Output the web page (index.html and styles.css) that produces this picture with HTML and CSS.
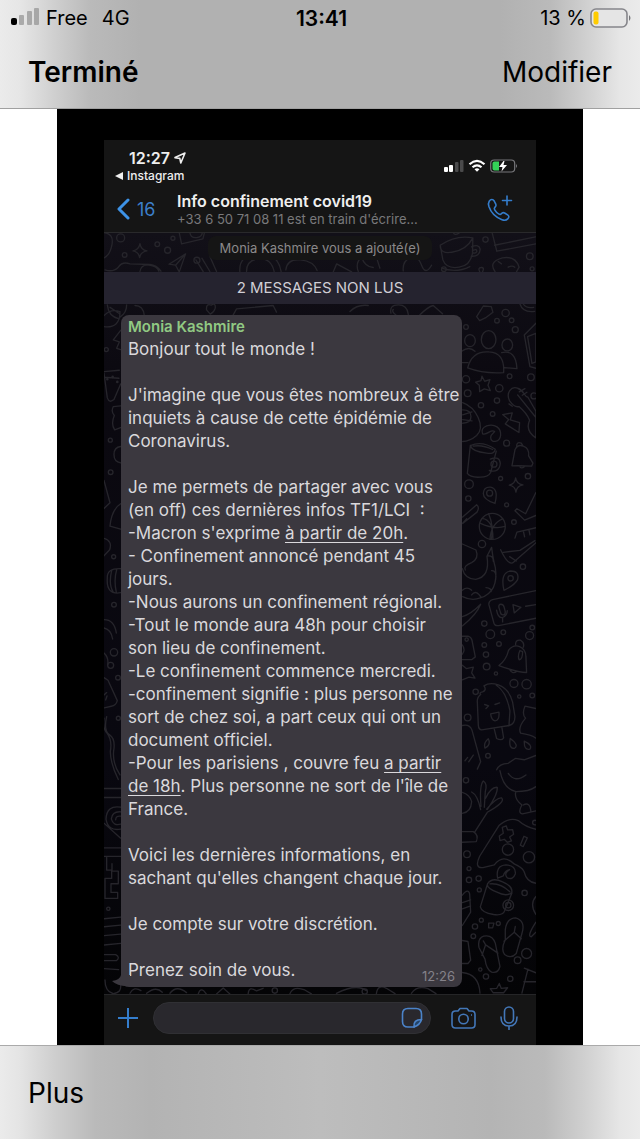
FILE: index.html
```html
<!DOCTYPE html>
<html lang="fr">
<head>
  <meta charset="UTF-8" />
  <meta name="viewport" content="width=device-width, initial-scale=1.0" />
  <title>Info confinement covid19</title>
  <link rel="stylesheet" href="styles.css">
</head>
<body>
  <header class="top-bar">
    <div class="status">
      <div class="status-left">
        <svg class="signal" viewBox="0 0 30 20" width="30" height="20" aria-hidden="true">
          <rect x="0" y="12" width="6" height="7" rx="2" fill="#000"/>
          <g fill="#929292" opacity=".7">
            <rect x="8" y="9" width="5" height="10" rx="1"/>
            <rect x="16" y="5" width="5" height="14" rx="1"/>
            <rect x="23" y="2" width="5" height="17" rx="1"/>
          </g>
        </svg>
        <span>Free</span>
        <span class="network">4G</span>
      </div>
      <time class="clock">13:41</time>
      <div class="status-right">
        <span>13 %</span>
        <svg viewBox="0 0 42 20" width="42" height="20" aria-hidden="true">
          <rect x="1" y="1" width="36" height="18" rx="5" fill="#e5e5e5" stroke="#85858a" stroke-width="1.6"/>
          <rect x="3.5" y="3.5" width="5" height="13" rx="2" fill="#fc0"/>
          <path d="M39 7q3 3 0 6z" fill="#77777b"/>
        </svg>
      </div>
    </div>
    <nav class="nav">
      <button class="nav-button done" type="button">Terminé</button>
      <button class="nav-button" type="button">Modifier</button>
    </nav>
  </header>

  <main class="stage">
    <section class="phone">
      <header class="phone-header">
        <div class="phone-status">
          <div>
            <div class="phone-clock">12:27
              <svg viewBox="0 0 12 12" width="12" height="12" aria-hidden="true">
                <path d="M1 5.6 11 1 6.8 11 5.8 6.4z" fill="none" stroke="#eee" stroke-width="1.6" stroke-linejoin="round"/>
              </svg>
            </div>
            <a class="back-app" href="#"><svg viewBox="0 0 8 8" width="8" height="8" aria-hidden="true"><path d="M0 4 8 0v8z" fill="#eee"/></svg>Instagram</a>
          </div>
          <svg class="phone-icons" viewBox="0 0 76 16" width="76" height="16" aria-hidden="true">
            <g fill="#fff">
              <rect x="1" y="9" width="4" height="5" rx="1"/>
              <rect x="6" y="7" width="4" height="7" rx="1"/>
            </g>
            <g fill="#4a4a4b">
              <rect x="12" y="4" width="3.500" height="10" rx="1"/>
              <rect x="17" y="2" width="3.500" height="12" rx="1"/>
            </g>
            <g fill="none" stroke="#fff" stroke-width="2.200">
              <path d="M26.500 6.300q7.500-6.800 15 0"/>
              <path d="M29.500 9.300q4.500-4 9 0"/>
            </g>
            <path d="M31.500 11.300q2.500-2 5 0L34 13.800z" fill="#fff"/>
            <rect x="47.700" y="2" width="24" height="12" rx="3.500" fill="none" stroke="#77777b" stroke-width="1.200"/>
            <path d="M51.500 3.500H56v9h-4.500q-2 0-2-2v-5q0-2 2-2z" fill="#34d158"/>
            <path d="M60.500 3 56 9h3.500l-1 4.500L64 7h-3.500l1-4z" fill="#fff"/>
            <path d="M73 6q2 2 0 4z" fill="#77777b"/>
          </svg>
        </div>
        <div class="chat-head">
          <a class="back" href="#" aria-label="Retour, 16 discussions non lues">
            <svg viewBox="0 0 15 22" width="15" height="22" aria-hidden="true"><path d="M12 2 3 11l9 9" fill="none" stroke="#3d92e6" stroke-width="3" stroke-linecap="round" stroke-linejoin="round"/></svg>
            16
          </a>
          <div class="chat-title">
            <h1>Info confinement covid19</h1>
            <p>+33 6 50 71 08 11 est en train d'écrire...</p>
          </div>
          <button class="icon-button" type="button" aria-label="Appeler">
            <svg viewBox="0 0 28 28" width="28" height="28" fill="none" stroke="#347dcc" stroke-width="1.600" stroke-linecap="round" stroke-linejoin="round" aria-hidden="true">
              <path d="M3.200 6.200C4.800 4 7 4 8.200 6l1.700 3.300c.7 1.400-.3 2.400-1.200 3.300-.6.700-.5 1.400 0 2.200 1 1.700 2.500 3.300 4.300 4.300.9.500 1.500.5 2.100-.2 1-1.200 2-1.700 3.500-.9l3 1.900c1.700 1.100 1.600 2.500.1 4-1.400 1.500-3.400 1.700-5.700.8C9.600 22.300 5 17.600 3 11.800c-.7-2.200-.9-3.900.2-5.600z"/>
              <path d="M21 1v9M16.500 5.500h9"/>
            </svg>
          </button>
        </div>
      </header>

      <div class="chat">
        <svg class="wallpaper" viewBox="0 0 432 761" preserveAspectRatio="xMidYMin slice" aria-hidden="true">
          <!-- above and around the notice -->
          <g transform="translate(-4 -98) scale(.333)">
            <circle cx="62" cy="309" r="12"/><circle cx="172" cy="328" r="7"/><circle cx="203" cy="346" r="9"/><circle cx="74" cy="360" r="7"/><circle cx="219" cy="310" r="6"/><circle cx="291" cy="376" r="9"/>
            <path d="M120 326q3 19 21 22-19 3-22 20-3-17-20-20 18-4 21-22z"/>
            <path d="M12 293q30 4 24 36t-24 40M238 294l7 33 64-15 5-20M270 293q2 17 20 15t17-17"/>
            <path d="m257 357-50 31 20 3 11 20zM227 391l30-34M15 405q25 8 40-8 12-18 35-10l60 2q20 2 33 20M120 410q3-22 27-19t30 18M310 410l-22-35M330 410l-24-40M350 410l-20-45"/>
            <path d="M420 410q-4-50 55-54t69 54M440 410q0-35 37-38t46 38M558 405q4-34 44-30t50 32M22 510q3 34 35 42M80 510q0 25-20 37M105 512q25 0 28 30M320 525q-2-20 14-14 14-9 12 9-3 12-15 18zM400 540l10-18 110-10 10 20"/>
          </g>
          <g transform="translate(216 -98) scale(.333)">
            <path d="M361 331q48-32 98-22l-1 45q-6 38-40 43-39 6-49-22zM361 331q0 27 35 21 44-6 63-43M455 336q23-10 26 7-1 23-27 21M461 346q10-5 10 4-2 6-11 4M365 400q45 15 85-5"/>
            <path d="M517 294l14 55 117-22M524 331l123-25M526 411q-22-30 22-42 39-7 50 28l-8 14M535 380l10 7M565 397q12-6 20 0M400 292q4 12 18 2M480 411q-7-12 4-13t4 13"/>
            <circle cx="497" cy="314" r="8"/><circle cx="630" cy="364" r="10"/><circle cx="372" cy="403" r="7"/><circle cx="637" cy="402" r="6"/>
            <path d="M115 410q-10-27 10-43 9 28 35 31M180 400l-8-25 20-20M250 408q-3-29 20-39t35 22 30 0M40 411l10-24 45 24M213 535q-5-25 22-25t30 28-25 11-20-25M90 530q22-22 55-18M300 540q24-24 40-28l28 25"/>
          </g>
          <!-- right-hand side -->
          <g transform="translate(351 67) scale(.333)">
            <path d="m65 50 20-32 24 2 5 17-20 15-20 10zM195 12q9 27 44 22M205 12q9 14 31 10"/>
            <circle cx="152" cy="39" r="11"/><circle cx="126" cy="62" r="7"/><circle cx="170" cy="61" r="7"/><circle cx="181" cy="89" r="9"/><circle cx="33" cy="81" r="7"/>
            <ellipse cx="101" cy="119" rx="22" ry="27"/><ellipse cx="45" cy="122" rx="16" ry="18"/><ellipse cx="157" cy="135" rx="16" ry="18"/>
            <path d="M38 204q13-52 64-48 48 2 44 62-60 4-108-14zM20 154q22-17 40 0M22 188h17M140 158q43-10 46 48l-38-3M243 70l-35 35 17 95 18 5M218 110l13 80 12-4V100z"/>
            <path d="m81 229 8 15 16-5-6 17 7 16-18-5-14 8-1-19-11-9 16-5z"/>
            <circle cx="33" cy="238" r="11"/><circle cx="38" cy="280" r="10"/><circle cx="133" cy="265" r="11"/><circle cx="164" cy="229" r="7"/><circle cx="228" cy="232" r="10"/><circle cx="126" cy="302" r="8"/><circle cx="78" cy="316" r="8"/><circle cx="113" cy="342" r="7"/><circle cx="237" cy="288" r="9"/>
            <path d="M164 303c-12-25 5-45 24-38 22 7 17 24 31 27l24 42v80q-33-22-19-53-9-22-32-41-13 4-28-17zM188 285l55 68M172 319l-10-7M193 276l17-10M202 286l14-9"/>
            <path d="m143 344 29-5-6 21 28 8-2 30-41-26 10-13z"/>
            <path d="M23 308c40 14 70 72 42 99-14 12-29 18-42 18M23 330q25 0 25 20t-25 20M23 345l28-9M23 359l28 4"/>
            <path d="M83 402q-7-16 12-24c25-8 44 7 42 28-2 21-30 26-30 6 0-10 10-12 12-17-11-10-20 12-36 7z"/>
            <path d="m46 437-9 84q9 13 39 11 24 0 31-14l17-64M46 437q36-15 75 11-2 16-26 12-44-5-49-23zM55 439q27-5 58 10M106 478q28-11 30 13-3 29-33 21"/><circle cx="117" cy="493" r="9"/>
            <path d="M171 498l9-48q8-18 25-11 19 7 16 29l13 22-4 9q-34-2-59-1zM185 440q0-16 14-10l5 8M194 499q4 10 15 1"/>
            <circle cx="155" cy="430" r="9"/><circle cx="219" cy="529" r="8"/><circle cx="42" cy="553" r="13"/><circle cx="137" cy="536" r="6"/><circle cx="40" cy="596" r="8"/><circle cx="155" cy="615" r="6"/><circle cx="177" cy="667" r="7"/>
            <path d="M182 534q3 19 22 21-19 3-21 22-2-18-20-21 18-4 19-22zM120 611q-35-12-35-30 1-20 21-19 26 4 14 49z"/><circle cx="104" cy="580" r="9"/>
            <path d="m180 633 29 28 34-14M180 633l6-6 26 15 31-64M23 652l42-37q10 7 1 22l-43 34M23 670l12-13M180 715l6-18 57-13M205 693l4 18M222 690l3 15"/>
            <circle cx="112" cy="680" r="39"/><path d="M75 670q43 20 75 10M101 642q17 40 8 77M81 656q34 4 33 62M143 657q-35 14-38 62"/>
          </g>
          <g transform="translate(351 307) scale(.333)">
            <circle cx="81" cy="12" r="11"/><circle cx="204" cy="80" r="8"/><circle cx="88" cy="251" r="8"/><circle cx="106" cy="283" r="13"/><circle cx="145" cy="277" r="7"/><circle cx="132" cy="312" r="7"/><circle cx="88" cy="315" r="7"/><circle cx="93" cy="344" r="8"/><circle cx="95" cy="380" r="10"/><circle cx="224" cy="287" r="12"/><circle cx="232" cy="263" r="7"/><circle cx="177" cy="431" r="12"/><circle cx="215" cy="433" r="14"/><circle cx="62" cy="456" r="8"/><circle cx="38" cy="533" r="10"/><circle cx="232" cy="467" r="7"/><circle cx="193" cy="470" r="5"/><circle cx="123" cy="401" r="5"/><circle cx="99" cy="648" r="7"/>
            <path d="M22 86q8 32 40 32 44-7 34-69l14-27q4 35 11 60 11 74-45 92-26 10-53-4M31 90q-7-12 19-22 23-13 13-38L22 12M98 48q18-2 17 16M110 92q16-1 12 27M93 143q16 1 16 12M50 165q13-18 29 8M22 151q14-13 28 0"/>
            <path d="M137 29q20 44 36 40L243 8M145 37l50-6 45-29M184 63l-20-13"/>
            <path d="M147 151q-12-54 20-58 27 0 21 26-9 17-41 32z"/><circle cx="167" cy="115" r="8"/>
            <path d="m243 152-130 27q-13 4-11 16l15 55q3 9 14 7l112-22M174 194l4 25 20-17zM132 203q-2-10 6-10t10 10l3 13q0 9-7 9t-8-9zM125 211q4 23 17 22 15-5 15-21M143 234v12M212 199l31-5"/>
            <path d="M22 230q26-7 55-37-12 31-55 65M22 289h17q10 3 12 12l10 50-10 8H22M22 315q10 14 0 28M22 376l12 10 21-4-5 17 10 16-18-3-20 8"/><circle cx="35" cy="299" r="5"/>
            <path d="M132 377q22-16 29-46 14-18 33-11 19 8 19 31l2 47q-30-1-83-21zM182 314q-1-15 15-13 13 8 8 21M165 390q8 14 20 5M195 332q-8 17-2 28 10-1 10-25z"/>
            <path d="M87 438q17-12 43-3 33 12 43 52l7 43q0 23-17 27l-83 13q-9 0-10-14l-3-70q-1-14 10-22-5-6 6-8 13-5 4-18zM124 436q30 19 41 77l-3 45M118 568l7 28q15 8 21-2l-5-30M89 494l12 4-8 8M120 494l14-5M107 522l25-5q2 25-12 26-11-3-13-21z"/>
            <path d="M243 506l-33-7q-10 25 2 36-24 28-15 45 32 5 46 15M22 557q22-5 29 14l26 95-10 22M30 663l8-10M41 666l14-20M90 625q-5-16 10-28 9 18-10 28zM166 596q-6 30 12 30 16-9-12-30zM208 604q-1 29 17 24 9-12-17-24zM125 690q8-18 34-19l22-15 27 4 35-13"/>
          </g>
          <g transform="translate(351 537) scale(.333)">
            <path d="M135 2q10 55 48 63 40 0 60-15M160 10q20 30 53 5M182 67q-4 21 19 38-14 24 2 27l40-9M205 105q20-11 23 20"/>
            <circle cx="33" cy="31" r="8"/>
            <path d="M22 67q22 6 28 28-2 32-28 35M77 119q-9-44-27-53M78 109q-5-64 7-76 13 8 6 32l-3 47M92 85q16-35 35-33 2 20-30 66M95 118q30-36 45-34 13 12-43 43l-37 58M22 185h33q17 10 9 30l-42 2"/>
            <path d="M243 178q-31-6-53-26-28-12-58 15l-58 92q-17 37 10 34l34-8q27-35 61-2 20 8 28 21 8 33 36 36"/>
            <path d="m142 172 12-4 4 12 15-1 3 14-12 8 6 12-13 4-9-9-13 4-2-14 12-8zM207 199l10 5-12 26-9-4z"/>
            <circle cx="159" cy="239" r="17"/><circle cx="222" cy="262" r="17"/><circle cx="240" cy="158" r="7"/><circle cx="36" cy="253" r="10"/><circle cx="42" cy="296" r="6"/><circle cx="42" cy="330" r="8"/><circle cx="71" cy="326" r="8"/><circle cx="73" cy="360" r="6"/><circle cx="209" cy="369" r="8"/>
            <path d="M128 325q-7-38 25-40 31 2 28 27-7 19-24 12-12-13 7-25-15 3-19 19zM98 341l-22 70q4 17 40 23 28 4 33-11l22-54M98 341q14-20 45-5 33 14 27 33-17 12-44-2-33-13-28-26zM105 342q32-3 60 24"/><circle cx="160" cy="406" r="16"/><circle cx="160" cy="406" r="8"/>
            <path d="M22 376q17-22 22-4l3 55-25 40M22 398l25-8M22 417l25-9M22 512l17 3 8 56-8 10H22M243 380q-20 22 0 54M243 457q-28 43-14 44l14-14"/>
            <circle cx="60" cy="470" r="8"/><circle cx="79" cy="451" r="6"/><path d="M101 460h16l-4 14h-12z"/><circle cx="130" cy="461" r="6"/><circle cx="55" cy="499" r="7"/><circle cx="215" cy="551" r="15"/><circle cx="188" cy="571" r="10"/><circle cx="166" cy="627" r="8"/><circle cx="93" cy="620" r="8"/><circle cx="76" cy="599" r="5"/>
            <path d="M72 533q-5-27 14-34 26-6 35 21l14 70q-6 22-25 17-16-8-20-39zM81 557l11-32 37 25M92 525l-7-12M151 480q4-35 31-36 31 9 19 47l-17 60q-15 17-35 3-12-15 2-44zM147 514l31-27 21 20M178 487l3-17"/>
            <path d="m133 641 6 15 19-2-12 15h-31l-9-12 19-1zM22 608q50 5 53 62M208 595l35 14M219 598l-18 72M207 636h36"/>
          </g>
          <!-- left-hand side -->
          <g transform="translate(-4 67) scale(.333)">
            <path d="M12 80q48 6 48-45M30 22l30 20M12 47q20-22 48-12M62 91l-22 29 18 6-8 19 12 4M12 215l46-4M12 220l10 74q6 17 20 5l20-47M12 232l45 3M62 318l-22 2q-8 15 3 27-11 25 1 43l18-7M62 440q-20 2-20 24t20 25M12 542l18 67-18 17M62 612q-27 17-32 67l32 9M12 716q26 7 17 34l-17 18M62 807q-42-2-40 28-4 52 40 44M35 812q-10 45 5 65M50 810q-9 30-1 68M12 960q31 0 37 40M12 985q22 5 26 33"/>
            <circle cx="19" cy="149" r="6"/><circle cx="31" cy="421" r="6"/><circle cx="32" cy="517" r="7"/><circle cx="41" cy="771" r="6"/><circle cx="42" cy="915" r="7"/><circle cx="22" cy="238" r="2"/><circle cx="38" cy="231" r="2"/><circle cx="52" cy="246" r="2"/>
          </g>
          <g transform="translate(-4 412) scale(.333)">
            <circle cx="42" cy="22" r="11"/><circle cx="32" cy="61" r="9"/><circle cx="54" cy="98" r="7"/><circle cx="55" cy="220" r="6"/><circle cx="25" cy="792" r="5"/>
            <path d="M12 24q15 14 11 36M12 98l12 8 28 61q-4 15-18 17l-22 5M12 150l8-7M17 165l4-12M20 215q-10 43 9 55 18 12 12 48-4 38 19 72M12 220q-5 30 10 46 15 20 9 54 0 35 24 84"/>
            <path d="M12 431h50M12 458h50M62 487q-42-7-44 36 6 37 44 30M62 501q-25-2-28 21 6 22 28 16M62 514q-15-2-15 11M12 535l50 45M12 609h50M12 635h50M20 638v38h15v25h-20v60h38v-18H33v-26h22v-38H36v-22M12 822l50-5M12 846l50-5M12 873l50-5M12 901l50-5M12 930h35q15 8 2 18H12M12 972l44 3"/>
          </g>
          <g transform="translate(-4 707) scale(.333)">
            <path d="M15 120q0 35 25 41 25-2 22-27M90 160q12-22 33-8M140 160q28-23 47-3M210 160q20-26 50-2M295 162q8-24 24 0M350 162l20-18 20 18M445 161q2-24 25-8l20-8M570 162q10-26 45-12l20 12"/>
            <circle cx="525" cy="152" r="8"/><circle cx="795" cy="155" r="8"/>
            <path d="M710 160q60-30 90-8M830 161q4-29 30-16l26 16M935 160q18-25 50-14l24 15"/>
          </g>
        </svg>

        <p class="notice"><span>Monia Kashmire vous a ajouté(e)</span></p>
        <h2 class="unread">2 MESSAGES NON LUS</h2>

        <article class="bubble">
          <svg class="tail" viewBox="0 0 18 12" width="18" height="12" aria-hidden="true"><path d="M9 0Q8 5 0 6q6 6 18 5V0z" fill="#3b383f"/></svg>
          <h3 class="sender">Monia Kashmire</h3>
          <p>Bonjour tout le monde !</p>
          <p>J'imagine que vous êtes nombreux à être<br>inquiets à cause de cette épidémie de<br>Coronavirus.</p>
          <p>Je me permets de partager avec vous<br>(en off) ces dernières infos TF1/LCI&nbsp; :<br>
            -Macron s'exprime <a href="#">à partir de 20h</a>.<br>
            - Confinement annoncé pendant 45<br>jours.<br>
            -Nous aurons un confinement régional.<br>
            -Tout le monde aura 48h pour choisir<br>son lieu de confinement.<br>
            -Le confinement commence mercredi.<br>
            -confinement signifie : plus personne ne<br>sort de chez soi, a part ceux qui ont un<br>document officiel.<br>
            -Pour les parisiens , couvre feu <a href="#">a partir<br>de 18h</a>. Plus personne ne sort de l'île de<br>France.</p>
          <p>Voici les dernières informations, en<br>sachant qu'elles changent chaque jour.</p>
          <p>Je compte sur votre discrétion.</p>
          <div class="last-line">
            <p>Prenez soin de vous.</p>
            <time>12:26</time>
          </div>
        </article>
      </div>

      <footer class="composer">
        <button class="icon-button" type="button" aria-label="Joindre">
          <svg viewBox="0 0 20 20" width="20" height="20" aria-hidden="true"><path d="M10 0v20M0 10h20" stroke="#347dcc" stroke-width="2"/></svg>
        </button>
        <div class="field">
          <input type="text" aria-label="Message">
          <button class="icon-button" type="button" aria-label="Autocollants">
            <svg viewBox="0 0 22 22" width="22" height="22" fill="none" stroke="#4b83c9" stroke-width="1.600" stroke-linejoin="round" aria-hidden="true">
              <path d="M7 1.500h8q5.500 0 5.500 5.500v5.500L13 20H7q-5.500 0-5.500-5.500V7Q1.500 1.500 7 1.500z"/>
              <path d="M13 20q-1-7.500 7.500-7.500Q19 18 13 20z" fill="#244468"/>
            </svg>
          </button>
        </div>
        <button class="icon-button" type="button" aria-label="Appareil photo">
          <svg viewBox="0 0 25 22" width="25" height="22" fill="none" stroke="#4377b8" stroke-width="1.600" stroke-linejoin="round" aria-hidden="true">
            <path d="M4.500 4H7l2-2.500h7L18 4h2.500Q24 4 24 7.500v10q0 3.500-3.500 3.500h-16Q1 21 1 17.500v-10Q1 4 4.500 4z"/>
            <circle cx="12.500" cy="12" r="4.700"/><path d="M20 8h1"/>
          </svg>
        </button>
        <button class="icon-button" type="button" aria-label="Message vocal">
          <svg viewBox="0 0 18 24" width="18" height="24" fill="none" stroke="#4377b8" stroke-width="1.600" stroke-linecap="round" aria-hidden="true">
            <rect x="4.500" y="1" width="9" height="16" rx="4.500"/>
            <path d="M1 11q0 9 8 9t8-9M9 20v3.500"/>
          </svg>
        </button>
      </footer>
    </section>
  </main>

  <footer class="bottom-bar">
    <button class="nav-button" type="button">Plus</button>
  </footer>
</body>
</html>
```
FILE: styles.css
```css
* {
  box-sizing: border-box;
}

body {
  font-family: Inter, "Liberation Sans", sans-serif;
  background-color: #fff;
  color: #000;
  margin: 0;
  min-height: 100vh;
  display: flex;
  flex-direction: column;
}

h1, h2, h3, p {
  margin: 0;
}

svg {
  display: block;
  flex: none;
}

button {
  border: 0;
  padding: 0;
  background: none;
  color: inherit;
  font: inherit;
}

a {
  color: inherit;
  text-decoration: none;
}

.top-bar {
  border-bottom: 1px solid #a0a0a0;
  background: linear-gradient(90deg, #ebebeb 0, #e6e6e6 20px, #cfcfcf 55px, #bababa 90px, #b1b1b1 140px, #b1b1b1 calc(100% - 140px), #bababa calc(100% - 90px), #cfcfcf calc(100% - 55px), #e6e6e6 calc(100% - 20px), #ebebeb 100%);
}

.status {
  display: grid;
  grid-template-columns: 1fr auto 1fr;
  align-items: center;
  height: 36px;
  padding: 0 8px 0 11px;
  font-size: 20px;
}

.status-left,
.status-right {
  display: flex;
  align-items: center;
}

.signal {
  margin: 0 5px 4px 0;
}

.network {
  margin-left: 14px;
}

.clock {
  font-size: 21px;
  font-weight: 600;
}

.status-right {
  justify-content: flex-end;
  gap: 4px;
}

.nav {
  display: flex;
  justify-content: space-between;
  align-items: center;
  height: 72px;
  padding: 0 28px;
}

.nav-button {
  font-size: 28px;
}

.done {
  font-weight: 600;
}

.stage {
  flex: 1;
  margin: 0 57px;
  padding: 31px 47px 0;
  background-color: #000;
  display: flex;
}

.phone {
  flex: 1;
  min-width: 0;
  display: flex;
  flex-direction: column;
  background-color: #151515;
  color: #dad8dc;
}

.phone-header {
  height: 93px;
  border-bottom: 1px solid #29292b;
}

.phone-status {
  display: flex;
  justify-content: space-between;
  padding: 8px 17px 0 11px;
  color: #eee;
}

.phone-clock {
  display: flex;
  align-items: center;
  gap: 4px;
  padding-left: 14px;
  font-size: 16px;
  font-weight: 600;
  line-height: 20px;
}

.back-app {
  display: flex;
  align-items: center;
  gap: 4px;
  font-size: 12px;
  font-weight: 500;
  line-height: 15px;
}

.phone-icons {
  margin-top: 10px;
}

.chat-head {
  display: flex;
  align-items: center;
  padding: 8px 22px 0 12px;
}

.back {
  display: flex;
  align-items: center;
  gap: 6px;
  width: 61px;
  color: #3c7fca;
  font-size: 18px;
}

.chat-title {
  flex: 1;
}

.chat-title h1 {
  color: #efefef;
  font-size: 16px;
  font-weight: 600;
  line-height: 20px;
}

.chat-title p {
  color: #79797b;
  font-size: 13px;
  line-height: 16px;
}

.chat {
  position: relative;
  flex: 1;
  background: linear-gradient(#121018, #0b0910 20%, #090810 70%, #040406);
  overflow: hidden;
}

.wallpaper {
  position: absolute;
  inset: 0;
  width: 100%;
  height: 100%;
  fill: none;
  stroke: #26252b;
  stroke-width: 4;
  stroke-linecap: round;
  stroke-linejoin: round;
}

.notice {
  position: relative;
  height: 39px;
  text-align: center;
  color: #8b898a;
  font-size: 13px;
  line-height: 24px;
  padding-top: 3px;
}

.notice span {
  display: inline-block;
  padding: 0 12px;
  border-radius: 8px;
  background-color: #151515;
}

.unread {
  position: relative;
  height: 32px;
  background-color: #25232f;
  color: #d0ced5;
  font-size: 15px;
  font-weight: 400;
  line-height: 32px;
  text-align: center;
}

.bubble {
  position: relative;
  margin: 11px 74px 7px 17px;
  padding: 1px 7px 5px;
  border-radius: 8px;
  background-color: #3b383f;
  font-size: 17px;
  line-height: 23px;
  white-space: nowrap;
}

.bubble > p {
  margin-bottom: 23px;
}

.bubble a {
  text-decoration: underline;
  text-decoration-thickness: 1px;
  text-underline-offset: 3px;
}

.tail {
  position: absolute;
  left: -9px;
  bottom: 0;
}

.sender {
  color: #91c983;
  font-size: 15px;
  font-weight: 600;
  line-height: 22px;
}

.last-line {
  display: flex;
  justify-content: space-between;
  align-items: flex-end;
}

.last-line time {
  color: #85828a;
  font-size: 13px;
  line-height: 12px;
}

.composer {
  display: flex;
  align-items: center;
  height: 51px;
  padding: 0 18px 5px 14px;
  border-top: 1px solid #252527;
}

.field {
  flex: 1;
  min-width: 0;
  display: flex;
  align-items: center;
  height: 32px;
  margin: 0 20px 0 15px;
  padding: 0 7px 0 12px;
  border: 1px solid #303034;
  border-radius: 16px;
  background-color: #29282d;
}

.field input {
  flex: 1;
  min-width: 0;
  border: 0;
  outline: 0;
  background: none;
  color: inherit;
  font: inherit;
}

.field + .icon-button {
  margin-right: 24px;
}

.icon-button {
  flex: none;
}

.bottom-bar {
  display: flex;
  align-items: center;
  height: 94px;
  padding: 0 28px;
  border-top: 1px solid #aaa;
  background: linear-gradient(90deg, #ebebeb 0, #e4e4e4 20px, #cecece 55px, #bababa 95px, #b3b3b3 150px, #bdbdbd 50%, #b4b4b4 calc(100% - 150px), #bababa calc(100% - 95px), #d0d0d0 calc(100% - 55px), #e6e6e6 calc(100% - 20px), #ebebeb 100%);
}
```
